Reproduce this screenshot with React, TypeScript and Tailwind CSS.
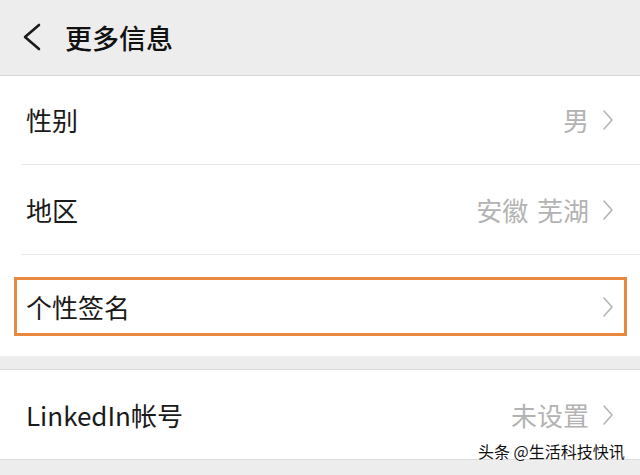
import React from 'react';

const CJK = "font-['Noto_Sans_CJK_SC','Noto_Sans',sans-serif]";

function Chevron() {
  return (
    <svg width="12" height="20" viewBox="0 0 12 20" className="shrink-0">
      <polyline points="2,1 10,10 2,19" fill="none" stroke="#b5b5b5" strokeWidth="1.6" strokeLinecap="round" strokeLinejoin="round" />
    </svg>
  );
}

function Row({ label, value, border = true, height }: { label: string; value?: string; border?: boolean; height: string }) {
  return (
    <div className={`pl-[22px] ${height}`}>
      <div className={`h-full flex items-center pl-[4px] pr-[26px] ${border ? 'border-b border-[#e6e6e6]' : ''}`}>
        <span className="text-[26px] leading-none text-[#1a1a1a] flex-1">{label}</span>
        {value && <span className="text-[26px] leading-none text-[#b3b3b3] mr-[13px] [word-spacing:3px]">{value}</span>}
        <Chevron />
      </div>
    </div>
  );
}

export default function App() {
  return (
    <div className={`w-[640px] h-[475px] bg-[#ededed] overflow-hidden relative ${CJK}`}>
      {/* header */}
      <div className="h-[76px] border-b border-[#d8d8d8] flex items-center pl-[22px]">
        <svg width="20" height="28" viewBox="0 0 20 28" className="mt-[-1px]">
          <polyline points="17,2 3,14 17,26" fill="none" stroke="#1a1a1a" strokeWidth="2.6" strokeLinecap="round" strokeLinejoin="round" />
        </svg>
        <span className="ml-[23px] text-[27px] leading-none font-medium text-[#111]">更多信息</span>
      </div>

      <div className="bg-white">
        <Row label="性别" value="男" height="h-[89px]" />
        <Row label="地区" value="安徽 芜湖" height="h-[90px]" />
        <div className="h-[101px] pl-[14px] pr-[13px] pt-[22px]">
          <div className="h-[59px] border-[3px] border-[#e8893f] flex items-center pl-[9px] pr-[10px]">
            <span className="text-[26px] leading-none text-[#1a1a1a] flex-1">个性签名</span>
            <Chevron />
          </div>
        </div>
      </div>

      <div className="h-[14px] border-b border-[#dcdcdc]" />

      <div className="bg-white h-[90px] border-b border-[#dcdcdc] flex items-center pl-[26px] pr-[26px]">
        <span className="text-[26px] leading-none text-[#1a1a1a] flex-1">LinkedIn帐号</span>
        <span className="text-[26px] leading-none text-[#b3b3b3] mr-[13px]">未设置</span>
        <Chevron />
      </div>

      {/* watermark */}
      <div className="absolute left-[478px] top-[443px] text-[16px] leading-none text-[#111] [text-shadow:0_0_2px_#fff,0_0_2px_#fff,0_0_1px_#fff] whitespace-nowrap">
        头条 @生活科技快讯
      </div>
    </div>
  );
}
